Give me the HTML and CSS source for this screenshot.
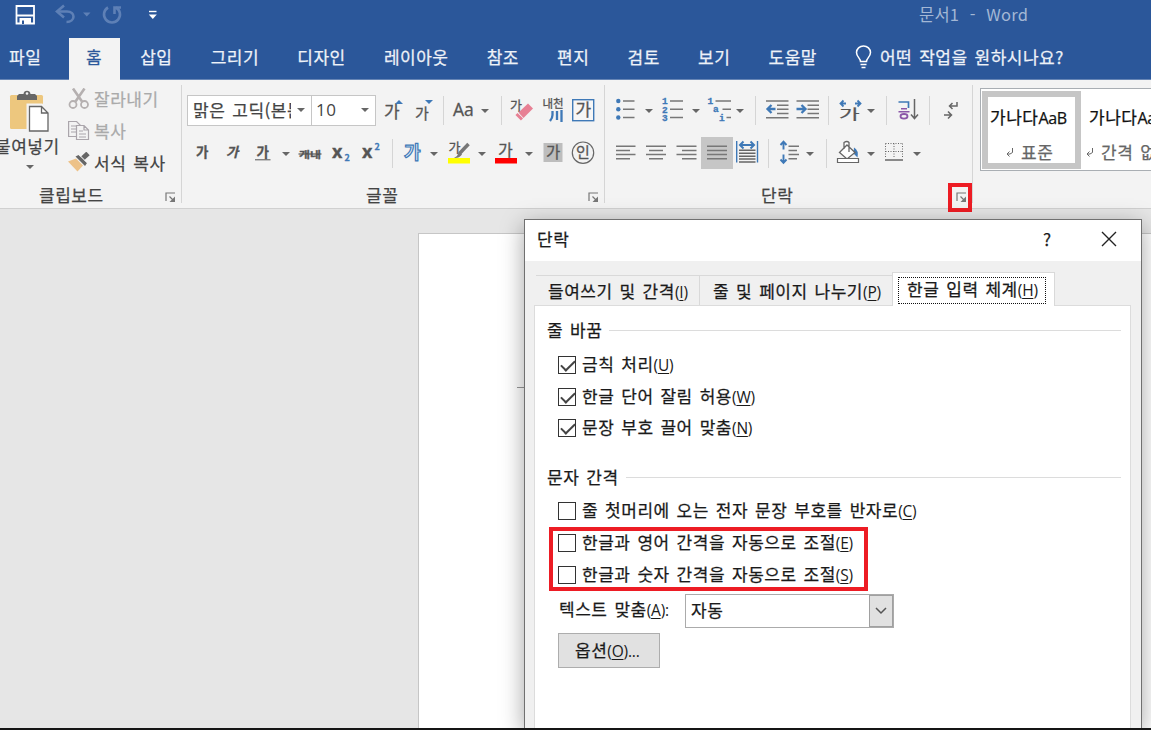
FILE: index.html
```html
<!DOCTYPE html>
<html lang="ko">

<head>
  <title>문서1 - Word</title>
  <meta charset="utf-8">
  <link rel="stylesheet" href="styles.css">
</head>

<body>
  <svg class="defs" width="0" height="0">
    <symbol id="drop" viewBox="0 0 8 4"><path d="M0 0h8L4 4z" fill="#666"/></symbol>
    <symbol id="launcher" viewBox="0 0 11 11"><path d="M1 9V1h9M4.500 4.500l4 4" fill="none" stroke="#777" stroke-width="1.200"/><path d="M10 4.500V10H4.500z" fill="#777"/></symbol>
  </svg>

  <div class="titlebar">
    <svg width="170" height="38" viewBox="0 0 170 38" fill="none">
      <path d="M16.500 6h17.500v17.500H16.500z" stroke="#fff" stroke-width="1.800"/>
      <path d="M17 15.500h17" stroke="#fff" stroke-width="2"/>
      <path d="M19.500 18h11.500v6H19.500z" fill="#fff"/><path d="M22 20.500h2V24h-2z" fill="#2b579a"/>
      <g stroke="#5e80b6" stroke-width="2.600">
        <path d="M57 11.500h10c9 0 8.500 10.500-.5 10.500"/><path d="M64 5.500l-7 6 7 6"/>
        <path d="M108 7.500a8 8 0 1 0 8 0"/><path d="M114.500 14V7.500h6.500"/>
      </g>
      <path d="M83 12.500h7.500l-3.700 4z" fill="#5e80b6"/>
      <path d="M149 11.500h7.500" stroke="#fff" stroke-width="1.400"/><path d="M148.800 14.500h8l-4 4.500z" fill="#fff"/>
    </svg>
    <div class="doc-title">문서1 &nbsp;- &nbsp;Word</div>
  </div>

  <div class="tabs">
    <div class="tab first">파일</div>
    <div class="tab active">홈</div>
    <div class="tab">삽입</div>
    <div class="tab">그리기</div>
    <div class="tab">디자인</div>
    <div class="tab">레이아웃</div>
    <div class="tab">참조</div>
    <div class="tab">편지</div>
    <div class="tab">검토</div>
    <div class="tab">보기</div>
    <div class="tab">도움말</div>
    <div class="tell-me">
      <svg width="17" height="24" viewBox="0 0 17 24" fill="none" stroke="#fff" stroke-width="1.500"><path d="M5.500 16.500c0-3.500-4-4.500-4-9a7 6.600 0 0 1 14 0c0 4.500-4 5.500-4 9zM5.500 19.500h6M6.500 22.500h4"/></svg>
      <span>어떤 작업을 원하시나요?</span>
    </div>
  </div>

  <div class="ribbon">
    <div class="group clipboard">
      <div class="group-body">
        <div class="paste">
          <svg width="60" height="46" viewBox="0 88 60 46">
            <rect x="10" y="95" width="33" height="34" rx="1.500" fill="#edc77e"/>
            <path d="M17 100v-4l2-2h4.500c0-4.500 7-4.500 7 0H35l2 2v4z" fill="#666"/><circle cx="27" cy="93.500" r="1.300" fill="#f3f3f3"/>
            <path d="M28.500 105.500h13l7 7v19h-20z" fill="#fff" stroke="#f3f3f3" stroke-width="4"/>
            <path d="M29.500 106.500h12l6.500 6.500v18H29.500zM41.500 106.500V113H48" fill="#fff" stroke="#666" stroke-width="1.300"/>
          </svg>
          <span class="paste-label">붙여넣기</span>
          <svg class="paste-drop" width="8" height="4"><use href="#drop"/></svg>
        </div>
        <div class="clip-list">
          <div class="clip-item disabled">
            <svg width="22" height="22" viewBox="68 88 22 22" fill="none" stroke="#b5b0b0" stroke-width="1.800"><circle cx="73" cy="104.500" r="3.500"/><circle cx="84.500" cy="104.500" r="3.500"/><path d="M75.500 101.500L84.500 88.500M82 101.500L73 88.500" stroke-width="2.600"/></svg>
            <span>잘라내기</span>
          </div>
          <div class="clip-item disabled">
            <svg width="22" height="22" viewBox="68 120 22 22" fill="#f3f3f3" stroke="#aaa5ab" stroke-width="1.200"><path d="M68.600 121.500h8l4 4v11h-12zM71 126h5M71 129h5M71 132h5"/><path d="M76.500 125.500h7.500l4.500 4.500v9.500h-12zM84 125.500v4.500h4.500M79 131h4M79 134h7M79 137h7"/></svg>
            <span>복사</span>
          </div>
          <div class="clip-item">
            <svg width="22" height="22" viewBox="68 152 22 22"><path d="M68 161.500l8-3 7 7-5.500 6z" fill="#edc289"/><path d="M75.500 156.500l3-1.500 8.500 8-2 3z" fill="#666"/><path d="M82.500 158.500l5.500-5" stroke="#666" stroke-width="5"/><path d="M79 154.500l9 9" stroke="#f3f3f3"/></svg>
            <span>서식 복사</span>
          </div>
        </div>
      </div>
      <div class="group-footer">
        <span>클립보드</span>
        <svg width="11" height="11"><use href="#launcher"/></svg>
      </div>
    </div>

    <div class="group font">
      <div class="group-body rows">
        <div class="row">
          <div class="combo font-name"><span>맑은 고딕(본문</span><svg width="8" height="4"><use href="#drop"/></svg></div>
          <div class="combo font-size"><span>10</span><svg width="8" height="4"><use href="#drop"/></svg></div>
          <svg width="67" height="36" viewBox="376 92 67 36" class="glyphs">
            <text x="384" y="118" font-size="17">가</text><path d="M395 104h8l-4-4z" fill="#3f79b7"/>
            <text x="415" y="118.500" font-size="15">가</text><path d="M425 100h8l-4 4z" fill="#3f79b7"/>
          </svg>
          <i class="sep"></i>
          <svg width="57" height="36" viewBox="444 92 57 36" class="glyphs">
            <text x="453" y="115.500" font-size="17.500" font-family="Open Sans">Aa</text><use href="#drop" x="481" y="109" width="8" height="4"/>
          </svg>
          <i class="sep"></i>
          <svg width="102" height="36" viewBox="502 92 102 36" class="glyphs">
            <text x="510" y="110" font-size="13">가</text>
            <path d="M518.500 112.500l9.500-9 5 5-9.500 9.500z" fill="#e78094"/><path d="M516.500 114l5.500 5.500" stroke="#e78094" stroke-width="3"/>
            <text x="542.500" y="108" font-size="11.500">내천</text>
            <path d="M552.500 111v4q0 3-2.500 6M557 111v9M561.500 110v12" fill="none" stroke="#3f79b7" stroke-width="2.300"/>
            <rect x="572.700" y="99.700" width="21" height="21" fill="#fff" fill-opacity=".3" stroke="#3f79b7" stroke-width="1.400"/>
            <text x="575.500" y="116" font-size="17">가</text>
          </svg>
        </div>
        <div class="row">
          <svg width="210" height="36" viewBox="182 135 210 36" class="glyphs">
            <text x="196" y="157" font-size="13.500" font-weight="bold">가</text>
            <text x="0" y="0" font-size="13.500" font-weight="bold" transform="translate(226 157) skewX(-13)">가</text>
            <text x="256.500" y="157" font-size="13.500" font-weight="bold">가</text><path d="M255 159.800h15.500" stroke="#555"/>
            <use href="#drop" x="282" y="152" width="8" height="4"/>
            <text x="299" y="157.500" font-size="9.500" font-weight="bold" textLength="22" lengthAdjust="spacingAndGlyphs">개내</text><path d="M298.500 154h23" stroke="#555" stroke-width="1.200"/>
            <text x="332" y="158" font-size="18" font-weight="bold" font-family="Open Sans">x</text><text x="344.500" y="160.500" font-size="9" font-weight="bold" class="blue">2</text>
            <text x="362" y="158" font-size="18" font-weight="bold" font-family="Open Sans">x</text><text x="374.500" y="150" font-size="9" font-weight="bold" class="blue">2</text>
          </svg>
          <i class="sep"></i>
          <svg width="211" height="36" viewBox="393 135 211 36" class="glyphs">
            <text x="404" y="158.500" font-size="18" font-weight="bold" class="outlined">가</text>
            <use href="#drop" x="430" y="152" width="8" height="4"/>
            <text x="448.500" y="152" font-size="13">가</text>
            <path d="M468.500 144l-9 9.500" stroke="#777" stroke-width="3.500"/><path d="M459 151.500l3 3q-3 4-8 3.500l3-2z" fill="#777"/>
            <path d="M448 158h22v5.500h-22z" fill="#ff0"/>
            <use href="#drop" x="478" y="152" width="8" height="4"/>
            <text x="498" y="156" font-size="16">가</text><path d="M495 158h22v5.500h-22z" fill="red"/>
            <use href="#drop" x="525" y="152" width="8" height="4"/>
            <path d="M543.500 143h19v19h-19z" fill="#bdbdbd"/><text x="546" y="158" font-size="15.500">가</text>
            <circle cx="583" cy="152.700" r="10.700" fill="none" stroke="#666" stroke-width="1.200"/><text x="576" y="157.500" font-size="15">인</text>
          </svg>
        </div>
      </div>
      <div class="group-footer">
        <span>글꼴</span>
        <svg width="11" height="11"><use href="#launcher"/></svg>
      </div>
    </div>

    <div class="group paragraph">
      <div class="group-body rows">
        <div class="row">
          <svg width="150" height="36" viewBox="605 92 150 36" class="glyphs">
            <g fill="#3f79b7"><circle cx="618.300" cy="101" r="2.200"/><circle cx="618.300" cy="109.300" r="2.200"/><circle cx="618.300" cy="117.500" r="2.200"/></g>
            <path d="M623 101h11.500M623 109.300h11.500M623 117.500h11.500M670 101h13M670 109.300h13M670 117.500h13M715.500 101h15.500M722.500 109.300h8.500M726.500 117.500h4.500" stroke="#777" stroke-width="1.500"/>
            <g class="blue" font-size="9.500" font-weight="bold" font-family="Liberation Mono">
              <text x="662" y="104">1</text><text x="662" y="112.500">2</text><text x="662" y="121">3</text>
              <text x="707.500" y="104">1</text><text x="713" y="111.500">a</text><text x="719" y="120.500">i</text>
            </g>
            <use href="#drop" x="645" y="109" width="8" height="4"/><use href="#drop" x="692" y="109" width="8" height="4"/><use href="#drop" x="736" y="109" width="8" height="4"/>
          </svg>
          <i class="sep"></i>
          <svg width="72" height="36" viewBox="756 92 72 36">
            <path d="M766 101h22.500M777 105.200h11.500M777 109.300h11.500M777 113.500h11.500M766 117.800h22.500M796.500 101H819M807.500 105.200H819M807.500 109.300H819M807.500 113.500H819M796.500 117.800H819" stroke="#777" stroke-width="1.400"/>
            <path d="M775.500 109H768M771.500 105l-4 4 4 4M796.500 109h8M801.500 105l4 4-4 4" fill="none" stroke="#3f79b7" stroke-width="2.300"/>
          </svg>
          <i class="sep"></i>
          <svg width="57" height="36" viewBox="829 92 57 36" class="glyphs">
            <path d="M846 103.500h-5M843.500 100.500l-3 3 3 3M855 103.500h5M857.500 100.500l3 3-3 3" fill="none" stroke="#3f79b7" stroke-width="1.800"/>
            <text transform="translate(839 119) scale(1.320 .8)" font-size="17">가</text>
            <use href="#drop" x="867" y="109" width="8" height="4"/>
          </svg>
          <i class="sep"></i>
          <svg width="42" height="36" viewBox="887 92 42 36" class="glyphs">
            <path d="M898.500 102h10v6" fill="none" stroke="#3f79b7" stroke-width="1.700"/>
            <path d="M901 108.700h6M898.500 111.700h11" stroke="#8b57a8" stroke-width="1.600"/><ellipse cx="904" cy="116.300" rx="3.500" ry="2.300" fill="none" stroke="#8b57a8" stroke-width="1.800"/>
            <path d="M914.500 99v19M911 114.500l3.500 4 3.500-4" fill="none" stroke="#666" stroke-width="1.500"/>
          </svg>
          <i class="sep"></i>
          <svg width="30" height="36" viewBox="930 92 30 36">
            <path d="M957 102v4h-7.500M952.500 103l-3 3 3 3M944 115h7.500M948 111.500l3.500 3.500-3.500 3.500" fill="none" stroke="#666" stroke-width="1.500"/>
          </svg>
        </div>
        <div class="row">
          <svg width="96" height="36" viewBox="605 135 96 36" stroke="#777" stroke-width="1.500">
            <path d="M616 146.200h19.500M616 150.400h14M616 154.600h19.500M616 158.800h14M646 146.200h20M649 150.400h14M646 154.600h20M649 158.800h14M676.500 146.200h20M682 150.400h14.500M676.500 154.600h20M682 158.800h14.500"/>
          </svg>
          <div class="pressed">
            <svg width="20" height="16" viewBox="707 145 20 16" stroke="#777" stroke-width="1.500"><path d="M707 146.200h20M707 150.400h20M707 154.600h20M707 158.800h20"/></svg>
          </div>
          <svg width="35" height="36" viewBox="733 135 35 36" fill="none">
            <path d="M736.700 141v21.500M757.500 141v21.500" stroke="#3f79b7" stroke-width="1.400"/>
            <path d="M740 145h14M743.500 141.500l-3.500 3.500 3.500 3.500M750.500 141.500l3.500 3.500-3.500 3.500" stroke="#3f79b7" stroke-width="2"/>
            <path d="M739 150.300h16.500M739 153.300h16.500M739 156.300h16.500M739 159h16.500M739 162h16.500" stroke="#666" stroke-width="1.400"/>
          </svg>
          <i class="sep"></i>
          <svg width="57" height="36" viewBox="769 135 57 36" fill="none">
            <path d="M783.500 142v7.500M780.500 145l3-3.300 3 3.300M783.500 154.500v8M780.500 159.500l3 3.300 3-3.300" stroke="#3f79b7" stroke-width="1.900"/>
            <path d="M788.500 146.200H799M788.500 150.400H797M788.500 154.600H799M788.500 158.800H797" stroke="#777" stroke-width="1.500"/>
            <use href="#drop" x="806" y="152" width="8" height="4"/>
          </svg>
          <i class="sep"></i>
          <svg width="100" height="36" viewBox="827 135 100 36">
            <path d="M854 147.500q5 3 3.500 10l-4-4z" fill="#3f79b7"/>
            <path d="M847 145l8 7.500-8 6.500-7.500-6.500zM844 149v-6.500q3-2 5 0V152" fill="#fff" stroke="#666" stroke-width="1.300"/>
            <path d="M837.500 158.500h21v4h-21z" fill="#fff" stroke="#666" stroke-width="1.200"/>
            <use href="#drop" x="867" y="152" width="8" height="4"/>
            <path d="M885.500 143.500h17M885.500 151.500h17M885.500 143.500v15M894 143.500v15M902.500 143.500v15" stroke="#666" stroke-dasharray="1 1.500" fill="none"/><path d="M885 160h18" stroke="#666" stroke-width="1.500"/>
            <use href="#drop" x="913" y="152" width="8" height="4"/>
          </svg>
        </div>
      </div>
      <div class="group-footer">
        <span>단락</span>
        <svg width="11" height="11"><use href="#launcher"/></svg>
        <div class="mark launcher-mark"></div>
      </div>
    </div>

    <div class="styles">
      <div class="style-tile selected">
        <div class="sample">가나다<b>AaB</b></div>
        <div class="style-name"><svg width="8" height="9" viewBox="0 0 8 9" fill="none" stroke="#666"><path d="M6.500 0v4.500L4 6H1M3.500 3.500L1 6l2.500 2.500"/></svg>표준</div>
      </div>
      <div class="style-tile">
        <div class="sample">가나다<b>AaB</b></div>
        <div class="style-name"><svg width="8" height="9" viewBox="0 0 8 9" fill="none" stroke="#666"><path d="M6.500 0v4.500L4 6H1M3.500 3.500L1 6l2.500 2.500"/></svg>간격 없음</div>
      </div>
    </div>
  </div>

  <div class="workspace">
    <div class="page"><div class="margin-mark"></div></div>

    <div class="dialog">
      <div class="dialog-title">
        <span>단락</span>
        <span class="help">?</span>
        <svg width="16" height="16" viewBox="0 0 16 16"><path d="M1 1l14 14M15 1L1 15" stroke="#222" stroke-width="1.400"/></svg>
      </div>
      <div class="dialog-tabs">
        <div class="dialog-tab indent">들여쓰기 및 간격<span class="key">(<u>I</u>)</span></div>
        <div class="dialog-tab breaks">줄 및 페이지 나누기<span class="key">(<u>P</u>)</span></div>
        <div class="dialog-tab current"><div class="focus">한글 입력 체계<span class="key">(<u>H</u>)</span></div></div>
      </div>
      <div class="panel">
        <div class="heading">줄 바꿈</div>
        <div class="check checked"><i></i><span>금칙 처리<span class="key">(<u>U</u>)</span></span></div>
        <div class="check checked"><i></i><span>한글 단어 잘림 허용<span class="key">(<u>W</u>)</span></span></div>
        <div class="check checked"><i></i><span>문장 부호 끌어 맞춤<span class="key">(<u>N</u>)</span></span></div>
        <div class="heading second">문자 간격</div>
        <div class="check"><i></i><span>줄 첫머리에 오는 전자 문장 부호를 반자로<span class="key">(<u>C</u>)</span></span></div>
        <div class="auto-spacing">
          <div class="check"><i></i><span>한글과 영어 간격을 자동으로 조절<span class="key">(<u>E</u>)</span></span></div>
          <div class="check"><i></i><span>한글과 숫자 간격을 자동으로 조절<span class="key">(<u>S</u>)</span></span></div>
          <div class="mark spacing-mark"></div>
        </div>
        <div class="align-row">
          <span>텍스트 맞춤<span class="key">(<u>A</u>):</span></span>
          <div class="select">
            <span>자동</span>
            <div class="select-button"><svg width="12" height="8" viewBox="0 0 12 8"><path d="M1 1l5 5 5-5" fill="none" stroke="#555" stroke-width="1.500"/></svg></div>
          </div>
        </div>
        <div class="options-button">옵션<span class="key">(<u>O</u>)...</span></div>
      </div>
    </div>
  </div>
</body>

</html>
```

FILE: styles.css
```css
* {
  box-sizing: border-box;
}

body {
  margin: 0;
  width: 1151px;
  height: 730px;
  overflow: hidden;
  display: flex;
  flex-direction: column;
  background: #e6e6e6;
  border-bottom: 2px solid #151515;
  font-family: "Noto Sans CJK KR", sans-serif;
  font-size: 17px;
  line-height: 24px;
  letter-spacing: 0.5px;
  word-spacing: 1.700px;
  color: #1a1a1a;
  white-space: nowrap;
  -webkit-text-stroke: 0.25px;
}

svg {
  display: block;
  flex: none;
}

.defs {
  position: absolute;
}

/* title bar and tabs */

.titlebar {
  flex: none;
  height: 38px;
  display: flex;
  background: #2b579a;
}

.doc-title {
  margin: 2px 0 0 749px;
  color: #a3b7d5;
  font-size: 16.500px;
  letter-spacing: 0.2px;
  word-spacing: 0.5px;
  -webkit-text-stroke: 0;
}

.tabs {
  flex: none;
  height: 42px;
  display: flex;
  background: #2b579a;
  border-bottom: 1px solid #6685b5;
  color: #eef2f8;
}

.tab {
  padding: 7px 19px 0 19.200px;
}

.tab.first {
  width: 69px;
  padding: 7px 0 0 9px;
}

.tab.active {
  width: 51px;
  height: 42px;
  margin-right: 1px;
  padding: 7px 0 0 17px;
  background: #f3f3f3;
  color: #2b579a;
}

.tell-me {
  display: flex;
  gap: 8px;
  margin-left: 19px;
  padding-top: 7px;
}

/* ribbon */

.ribbon {
  flex: none;
  height: 129px;
  display: flex;
  background: #f3f3f3;
  border-bottom: 1px solid #d0d0d0;
  color: #444;
}

.group {
  flex: none;
  height: 118px;
  margin-top: 5px;
  border-right: 1px solid #d5d5d5;
}

.clipboard {
  width: 182px;
}

.font {
  width: 423px;
}

.paragraph {
  width: 368px;
}

.group-body {
  display: flex;
  height: 98px;
}

.group-footer {
  position: relative;
  display: flex;
  justify-content: space-between;
  height: 24px;
}

.clipboard .group-footer {
  padding: 0 5px 0 39px;
}

.font .group-footer {
  padding: 0 5px 0 184px;
}

.paragraph .group-footer {
  padding: 0 5px 0 156px;
}

.group-footer svg {
  margin-top: 9px;
}

.paste {
  width: 60px;
  padding-top: 3px;
}

.paste-label {
  display: block;
  margin-left: -5px;
}

.paste-drop {
  margin: 7px 0 0 26px;
}

.clip-list {
  display: flex;
  flex-direction: column;
  gap: 8px;
  padding: 2px 0 0 8px;
}

.clip-item {
  display: flex;
  gap: 4px;
  height: 24px;
}

.clip-item svg {
  margin-top: 1px;
}

.disabled {
  color: #aaa;
}

.rows {
  flex-direction: column;
  gap: 7px;
  padding-top: 7px;
}

.row {
  display: flex;
  align-items: center;
  height: 36px;
}

.sep {
  flex: none;
  width: 1px;
  height: 29px;
  background: #d5d5d5;
}

.glyphs text {
  fill: #555;
  stroke: #555;
  stroke-width: 0.300px;
  letter-spacing: 0;
}

.glyphs .blue,
.glyphs .blue text {
  fill: #3f79b7;
  stroke: #3f79b7;
}

.glyphs .outlined {
  fill: #dceaf6;
  stroke: #3f79b7;
  stroke-width: 1.200px;
}

.combo {
  display: flex;
  align-items: center;
  justify-content: space-between;
  height: 31px;
  padding: 0 6px 0 5px;
  background: #fff;
  border: 1px solid #c6c6c6;
}

.combo span {
  overflow: hidden;
}

.font-name {
  width: 125px;
  margin-left: 5px;
}

.font-name span {
  width: 98px;
}

.font-size {
  width: 65px;
  margin-left: -1px;
  padding-left: 4px;
  font-family: "Open Sans", sans-serif;
  -webkit-text-stroke: 0;
}

.pressed {
  display: flex;
  align-items: center;
  justify-content: center;
  width: 32px;
  height: 32px;
  background: #c6c6c6;
}

.mark {
  position: absolute;
  border: 4px solid #ed1c24;
}

.launcher-mark {
  top: 0;
  right: 0;
  width: 24px;
  height: 29px;
}

.styles {
  flex: none;
  display: flex;
  width: 171px;
  height: 83px;
  margin: 8px 0 0 7px;
  padding: 2px 0 1px 1px;
  overflow: hidden;
  border: 1px solid #a9aeb3;
  border-right: none;
  background: #fff;
}

.style-tile {
  flex: none;
  width: 99px;
  padding: 14px 8px 0;
}

.style-tile.selected {
  padding: 8px 2px 0;
  border: 6px solid #c6c6c6;
}

.sample {
  width: 81px;
  overflow: hidden;
  color: #111;
}

.sample b {
  font-family: "Open Sans", sans-serif;
  font-size: 16px;
  font-weight: 400;
  letter-spacing: -0.3px;
}

.style-name {
  display: flex;
  align-items: center;
  gap: 7px;
  margin-top: 10px;
  margin-left: -3px;
  color: #666;
}

.selected .style-name {
  margin-left: 16px;
}

/* document area */

.workspace {
  position: relative;
  flex: 1;
}

.page {
  height: 495px;
  margin: 24px 0 0 418px;
  background: #fff;
  border: 1px solid #c6c6c6;
  border-width: 1px 0 0 1px;
}

.margin-mark {
  width: 9px;
  margin-left: 98px;
  padding-top: 153px;
  border-bottom: 1px solid #999;
}

/* paragraph dialog */

.dialog {
  position: absolute;
  left: 524px;
  top: 10px;
  width: 618px;
  height: 509px;
  display: flex;
  flex-direction: column;
  background: #f0f0f0;
  border: 1px solid #707070;
  border-bottom: none;
  box-shadow: 0 6px 22px rgba(0, 0, 0, 0.36);
}

.dialog-title {
  display: flex;
  height: 41px;
  padding: 7px 24px 0 12px;
  background: #fff;
}

.help {
  width: 10px;
  margin: 0 48px 0 auto;
  font-size: 17px;
}

.dialog-title svg {
  margin-top: 4px;
}

.dialog-tabs {
  display: flex;
  align-items: flex-end;
  height: 44px;
  margin-left: 11px;
  position: relative;
}

.dialog-tab {
  height: 30px;
  padding-top: 3px;
  padding-left: 12px;
  border: 1px solid #d9d9d9;
  border-width: 1px 1px 0 0;
}

.indent {
  width: 164px;
}

.breaks {
  width: 192px;
  padding-left: 13px;
  border-right: none;
}

.dialog-tab.current {
  width: 163px;
  height: 34px;
  margin-bottom: -1px;
  padding: 4px 0 0 5px;
  background: #fff;
  border-left-width: 1px;
}

.focus {
  width: 148px;
  height: 27px;
  padding: 0 8px;
  border: 1px dotted #111;
  line-height: 22px;
}

.key {
  font-family: "Open Sans", sans-serif;
  font-size: 15.500px;
  letter-spacing: -0.2px;
  -webkit-text-stroke: 0;
}

.key u {
  text-decoration-thickness: 1px;
  text-underline-offset: 2px;
}

.panel {
  flex: 1;
  width: 597px;
  margin-left: 9px;
  padding: 9px 9px 0 12px;
  background: #fff;
  border: 1px solid #dcdcdc;
  border-bottom: none;
}

.heading {
  display: flex;
  align-items: center;
  gap: 7px;
  height: 30px;
  margin-bottom: 4px;
  line-height: 22px;
}

.heading.second {
  margin: 18px 0 3px;
}

.heading::after {
  content: "";
  flex: 1;
  height: 1px;
  background: #dcdcdc;
}

.check {
  display: flex;
  align-items: center;
  height: 31.800px;
  padding-left: 11px;
}

.check span {
  padding-bottom: 1px;
}

.check i {
  width: 18px;
  height: 18px;
  margin-right: 6px;
  border: 1px solid #333;
}

.checked i::after {
  content: "";
  display: block;
  width: 12px;
  height: 6px;
  margin: 3px 0 0 2px;
  border: solid #444;
  border-width: 0 0 2px 2px;
  transform: rotate(-45deg);
}

.auto-spacing {
  position: relative;
}

.spacing-mark {
  left: 2px;
  top: 0;
  width: 319px;
  height: 64px;
}

.align-row {
  display: flex;
  align-items: center;
  justify-content: space-between;
  width: 347px;
  margin-top: 3px;
  padding-left: 12px;
  line-height: 20px;
}

.align-row > span {
  padding-bottom: 2px;
}

.select {
  display: flex;
  justify-content: space-between;
  width: 209px;
  height: 34px;
  padding-left: 5px;
  border: 1px solid #ababab;
  line-height: 29px;
}

.select-button {
  display: flex;
  align-items: center;
  justify-content: center;
  width: 24px;
  background: #e1e1e1;
  border: 1px solid #a0a0a0;
}

.options-button {
  width: 102px;
  height: 35px;
  margin: 5px 0 0 11px;
  padding-left: 16px;
  background: #e1e1e1;
  border: 1px solid #adadad;
  line-height: 31px;
}
```
